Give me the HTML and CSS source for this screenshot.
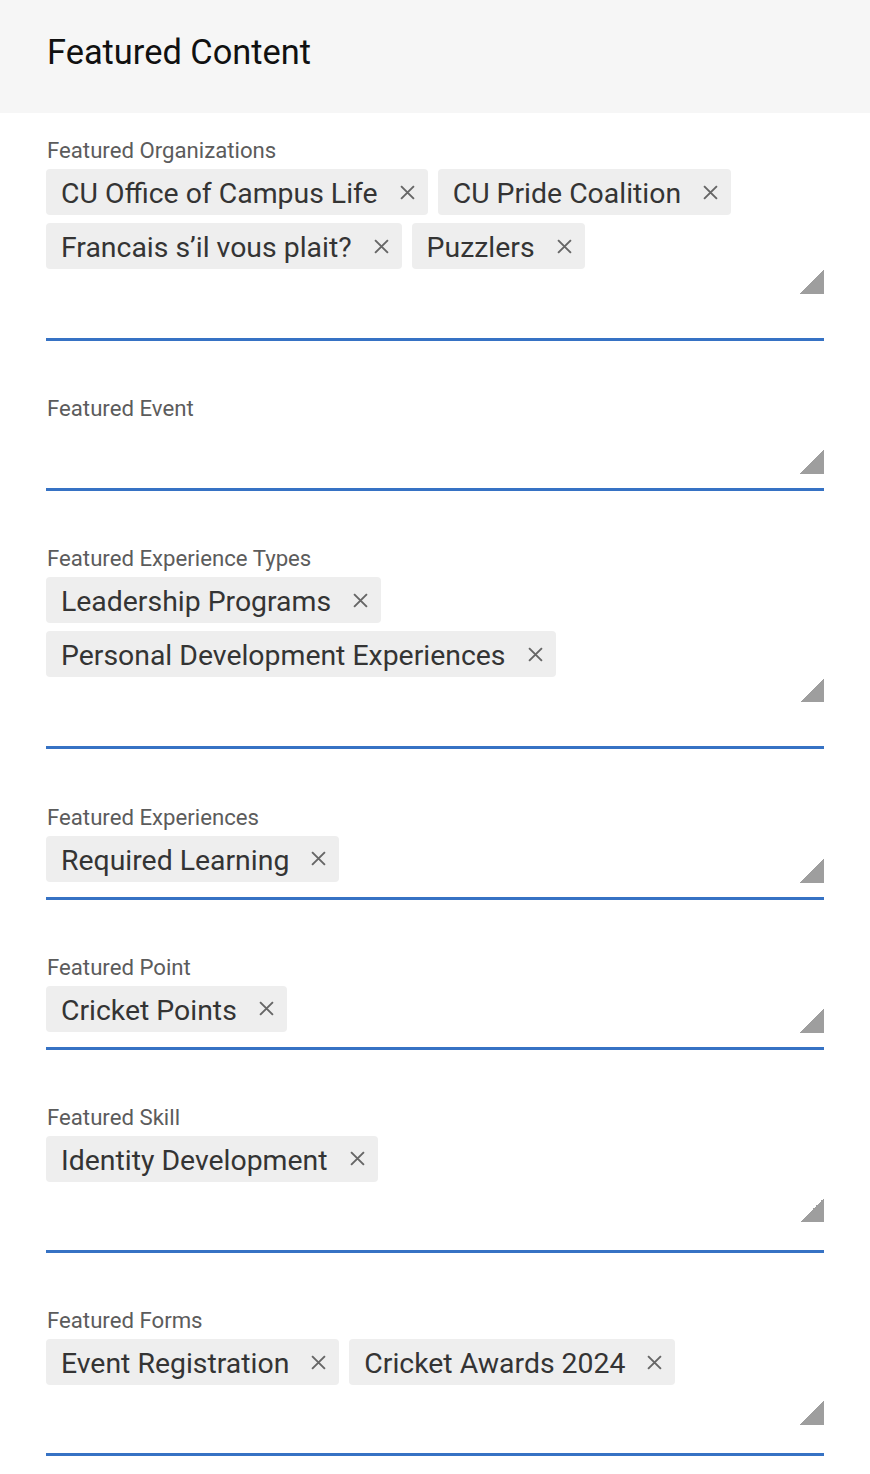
FILE: index.html
```html
<!DOCTYPE html>
<html lang="en">
<head>
<meta charset="utf-8">
<title>Featured Content</title>
<link rel="stylesheet" href="styles.css">
</head>
<body>
<header class="page-head">
  <h1 class="page-title">Featured Content</h1>
</header>
<main class="form">
  <div class="field">
    <label class="field-label">Featured Organizations</label>
    <div class="box box-tall">
      <div class="area">
        <div class="chips">
          <span class="chip">CU Office of Campus Life<svg class="chip-x" viewBox="0 0 14 14"><path d="M1 1L13 13M13 1L1 13"/></svg></span>
          <span class="chip">CU Pride Coalition<svg class="chip-x" viewBox="0 0 14 14"><path d="M1 1L13 13M13 1L1 13"/></svg></span>
          <span class="chip">Francais s’il vous plait?<svg class="chip-x" viewBox="0 0 14 14"><path d="M1 1L13 13M13 1L1 13"/></svg></span>
          <span class="chip">Puzzlers<svg class="chip-x" viewBox="0 0 14 14"><path d="M1 1L13 13M13 1L1 13"/></svg></span>
        </div>
        <span class="grip"></span>
      </div>
    </div>
  </div>

  <div class="field">
    <label class="field-label">Featured Event</label>
    <div class="box">
      <div class="area">
        <div class="chips"></div>
        <span class="grip"></span>
      </div>
    </div>
  </div>

  <div class="field">
    <label class="field-label">Featured Experience Types</label>
    <div class="box box-tall">
      <div class="area">
        <div class="chips">
          <span class="chip">Leadership Programs<svg class="chip-x" viewBox="0 0 14 14"><path d="M1 1L13 13M13 1L1 13"/></svg></span>
          <span class="chip">Personal Development Experiences<svg class="chip-x" viewBox="0 0 14 14"><path d="M1 1L13 13M13 1L1 13"/></svg></span>
        </div>
        <span class="grip"></span>
      </div>
    </div>
  </div>

  <div class="field">
    <label class="field-label">Featured Experiences</label>
    <div class="box">
      <div class="area">
        <div class="chips">
          <span class="chip">Required Learning<svg class="chip-x" viewBox="0 0 14 14"><path d="M1 1L13 13M13 1L1 13"/></svg></span>
        </div>
        <span class="grip"></span>
      </div>
    </div>
  </div>

  <div class="field">
    <label class="field-label">Featured Point</label>
    <div class="box">
      <div class="area">
        <div class="chips">
          <span class="chip">Cricket Points<svg class="chip-x" viewBox="0 0 14 14"><path d="M1 1L13 13M13 1L1 13"/></svg></span>
        </div>
        <span class="grip"></span>
      </div>
    </div>
  </div>

  <div class="field">
    <label class="field-label">Featured Skill</label>
    <div class="box box-mid">
      <div class="area">
        <div class="chips">
          <span class="chip">Identity Development<svg class="chip-x" viewBox="0 0 14 14"><path d="M1 1L13 13M13 1L1 13"/></svg></span>
        </div>
        <span class="grip"></span>
      </div>
    </div>
  </div>

  <div class="field">
    <label class="field-label">Featured Forms</label>
    <div class="box box-mid">
      <div class="area">
        <div class="chips">
          <span class="chip">Event Registration<svg class="chip-x" viewBox="0 0 14 14"><path d="M1 1L13 13M13 1L1 13"/></svg></span>
          <span class="chip">Cricket Awards 2024<svg class="chip-x" viewBox="0 0 14 14"><path d="M1 1L13 13M13 1L1 13"/></svg></span>
        </div>
        <span class="grip"></span>
      </div>
    </div>
  </div>
</main>
</body>
</html>
```

FILE: styles.css
```css
* { box-sizing: border-box; }

body {
  margin: 0;
  background: #ffffff;
  font-family: Roboto, "Liberation Sans", sans-serif;
  color: #333333;
}

.page-head {
  height: 113px;
  background: #f6f6f6;
  padding: 32px 0 0 47px;
}

.page-title {
  margin: 0;
  font-size: 34.4px;
  line-height: 41px;
  font-weight: 400;
  color: #111111;
}

.form {
  padding: 24px 46px 0 46px;
  display: flex;
  flex-direction: column;
  gap: 54.2px;
}

.field {
  display: flex;
  flex-direction: column;
  gap: 6px;
}

.field-label {
  display: block;
  padding-left: 1px;
  font-size: 22.2px;
  line-height: 26px;
  color: #5c5c5c;
}

.box {
  border-bottom: 3px solid #3672c4;
  padding-bottom: 14px;
}

.box-tall { padding-bottom: 44px; }
.box-mid { padding-bottom: 28px; }

.area {
  position: relative;
  min-height: 47px;
}

.box-tall .area { min-height: 125px; }
.box-mid .area { min-height: 86px; }

.chips {
  display: flex;
  flex-wrap: wrap;
  gap: 8px 10px;
  padding-right: 40px;
}

.chip {
  display: inline-flex;
  align-items: center;
  height: 46px;
  padding: 3px 13px 0 15px;
  background: #eeeeee;
  border-radius: 4px;
  font-size: 28.4px;
  line-height: 43px;
  color: #343434;
  white-space: nowrap;
}

.chip-x {
  width: 15px;
  height: 15px;
  margin-left: 22px;
  margin-top: -3px;
  stroke: #666666;
  stroke-width: 1.8;
  fill: none;
  flex: none;
}

.grip {
  position: absolute;
  right: 0;
  bottom: 0;
  width: 24px;
  height: 24px;
  background: linear-gradient(to bottom right, transparent 50%, #9e9e9e 50%);
}
```
